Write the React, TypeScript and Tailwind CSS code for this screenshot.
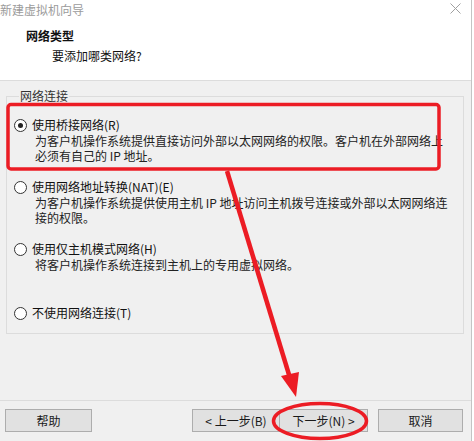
import React from 'react'

const font = "font-['Microsoft_YaHei','Noto_Sans_CJK_SC','Noto_Sans',sans-serif]"

function Radio ({ checked }: { checked?: boolean }) {
  return (
    <span className="flex size-[13px] shrink-0 items-center justify-center rounded-full border border-[#333] bg-white">
      {checked && <span className="size-[5px] rounded-full bg-[#222]" />}
    </span>
  )
}

type Opt = { label: string, desc?: string[], checked?: boolean, mt: string }

const options: Opt[] = [
  {
    label: '使用桥接网络(R)',
    desc: ['为客户机操作系统提供直接访问外部以太网网络的权限。客户机在外部网络上', '必须有自己的 IP 地址。'],
    checked: true,
    mt: 'mt-0'
  },
  {
    label: '使用网络地址转换(NAT)(E)',
    desc: ['为客户机操作系统提供使用主机 IP 地址访问主机拨号连接或外部以太网网络连', '接的权限。'],
    mt: 'mt-[16px]'
  },
  {
    label: '使用仅主机模式网络(H)',
    desc: ['将客户机操作系统连接到主机上的专用虚拟网络。'],
    mt: 'mt-[16px]'
  },
  { label: '不使用网络连接(T)', mt: 'mt-[33px]' }
]

function Btn ({ children, className }: { children: React.ReactNode, className?: string }) {
  return (
    <button className={`h-[23px] border border-[#adadad] bg-[#e1e1e1] text-[12px] leading-[21px] text-[#1a1a1a] ${className ?? ''}`}>
      {children}
    </button>
  )
}

export default function App () {
  return (
    <div className={`relative h-[441px] w-[474px] overflow-hidden bg-white ${font}`}>
      <div className="flex h-full w-[472px] flex-col border-r border-[#c4c4c4] bg-[#f0f0f0]">
        {/* header */}
        <div className="h-[81px] shrink-0 border-b border-[#dcdcdc] bg-white">
          <div className="flex h-[20px] items-center justify-between">
            <span className="text-[12px] leading-[20px] text-[#9b9b9b]">新建虚拟机向导</span>
            <svg width="11" height="11" viewBox="0 0 11 11" className="mr-[10px] -mt-[3px]">
              <path d="M0.5 0.5 L10.5 10.5 M10.5 0.5 L0.5 10.5" stroke="#a0a0a0" strokeWidth="1" />
            </svg>
          </div>
          <div className="mt-[8px] pl-[26px] text-[12px] font-bold leading-[16px] text-[#111]">网络类型</div>
          <div className="mt-[4px] pl-[52px] text-[12px] leading-[16px] text-[#111]">要添加哪类网络?</div>
        </div>

        {/* body */}
        <div className="flex-1 px-[6px] pt-[7px]">
          <fieldset className="h-[246px] w-[458px] border border-[#dcdcdc] px-[7px] pt-[13px]">
            <legend className="ml-[5px] px-px text-[12px] leading-[16px] text-[#333]">网络连接</legend>
            {options.map(o => (
              <div key={o.label} className={o.mt}>
                <div className="flex h-[16px] items-center gap-[5px] text-[12px] leading-[16px] text-[#111]">
                  <Radio checked={o.checked} />
                  <span>{o.label}</span>
                </div>
                {o.desc && (
                  <div className="whitespace-nowrap pl-[21px] text-[12px] leading-[15px] text-[#222]">
                    {o.desc.map(d => <div key={d}>{d}</div>)}
                  </div>
                )}
              </div>
            ))}
          </fieldset>
        </div>

        {/* footer */}
        <div className="flex h-[41px] shrink-0 items-start border-t border-[#dcdcdc] pl-[5px] pr-[8px] pt-[8px]">
          <Btn className="w-[87px]">帮助</Btn>
          <div className="flex-1" />
          <Btn className="w-[88px]">&lt; 上一步(B)</Btn>
          <Btn className="w-[89px] -ml-px">下一步(N) &gt;</Btn>
          <Btn className="ml-[10px] w-[85px]">取消</Btn>
        </div>
      </div>

      {/* red annotation overlay */}
      <svg className="pointer-events-none absolute inset-0" width="474" height="441" viewBox="0 0 474 441">
        <rect x="8" y="104.5" width="431" height="64.5" rx="3" fill="none" stroke="#ec1c24" strokeWidth="3.5" />
        <line x1="227" y1="171" x2="290" y2="378" stroke="#ec1c24" strokeWidth="4.5" />
        <polygon points="281,376 299,372 296,397" fill="#ec1c24" />
        <ellipse cx="320" cy="421" rx="46.5" ry="17.5" fill="none" stroke="#ec1c24" strokeWidth="3.5" />
      </svg>
    </div>
  )
}
